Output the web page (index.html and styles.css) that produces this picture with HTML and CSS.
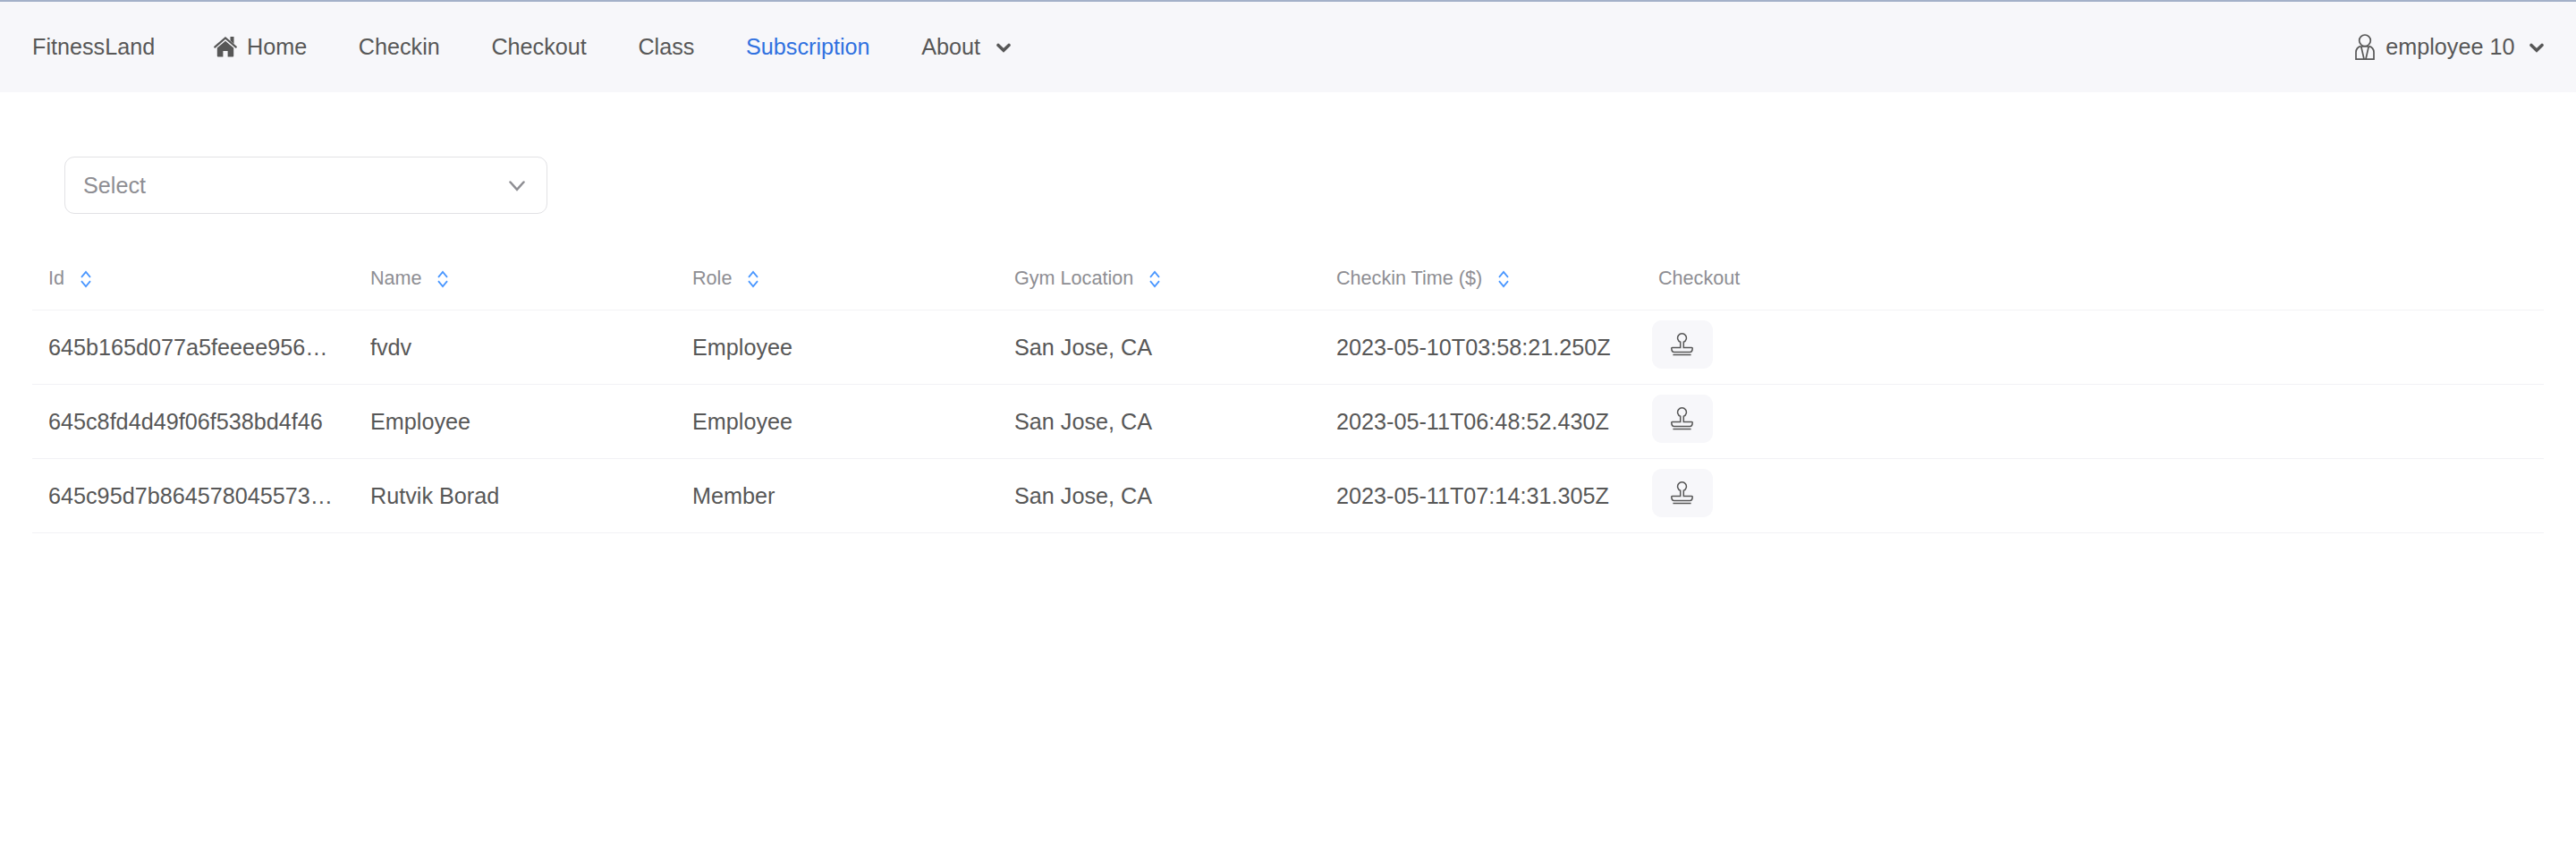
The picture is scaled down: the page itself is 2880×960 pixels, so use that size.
FILE: index.html
```html
<!DOCTYPE html>
<html lang="en">
<head>
<meta charset="utf-8">
<title>FitnessLand</title>
<link rel="stylesheet" href="styles.css">
</head>
<body>
<svg class="defs" width="0" height="0">
  <symbol id="caret" viewBox="0 0 16 11"><path d="M2 2.4 8 8.2 14 2.4" fill="none" stroke="currentColor" stroke-width="3.5" stroke-linecap="round" stroke-linejoin="miter"/></symbol>
  <symbol id="sort" viewBox="0 0 12 20"><path d="M1 7.8 6 2 11 7.8M1 12.2 6 18 11 12.2" fill="none" stroke="currentColor" stroke-width="1.8"/></symbol>
  <symbol id="stamp" viewBox="0 0 25 26"><path d="M10.7 16.4V10.3A4.9 4.9 0 1 1 14.3 10.3V16.4H23.3Q24.3 16.4 24.2 17.6Q24 21.4 21.4 21.4H3.6Q1 21.4 .8 17.6Q.7 16.4 1.7 16.4ZM2.4 24.6H22.6" fill="none" stroke="currentColor" stroke-width="1.5"/></symbol>
</svg>
<header class="navbar">
  <a class="brand">FitnessLand</a>
  <nav class="nav">
    <a class="item"><svg class="home" viewBox="0 0 26 24"><path d="M1.2 12.6 13 2.4 24.8 12.6" fill="none" stroke="currentColor" stroke-width="2.2" stroke-linecap="round"/><path d="M18.5 1H22.5V9L18.5 5.6ZM13 5.7 22.2 13.6V22.5Q22.2 23.4 21.3 23.4H15.6V17H10.4V23.4H4.7Q3.8 23.4 3.8 22.5V13.6Z" fill="currentColor"/></svg>Home</a>
    <a class="item">Checkin</a>
    <a class="item">Checkout</a>
    <a class="item">Class</a>
    <a class="item active">Subscription</a>
    <a class="item">About<svg class="caret"><use href="#caret"/></svg></a>
  </nav>
  <div class="user">
    <svg class="person" viewBox="0 0 22 30"><path d="M11 1A6.2 6.2 0 0 1 11 13.6 6.2 6.2 0 0 1 11 1ZM6.6 13.6Q1 15 1 20.5V28.2H21V20.5Q21 15 15.4 13.6M6.8 14 10 28M15.2 14 12 28M7 14H15" fill="none" stroke="currentColor" stroke-width="1.7"/></svg>employee 10<svg class="caret"><use href="#caret"/></svg>
  </div>
</header>
<main class="content">
  <div class="picker">Select<svg viewBox="0 0 18 12"><path d="M1.5 1.5 9 9.8 16.5 1.5" fill="none" stroke="currentColor" stroke-width="2.5" stroke-linecap="round"/></svg></div>
  <div class="table">
    <div class="row head">
      <div class="cell">Id<svg class="sort"><use href="#sort"/></svg></div>
      <div class="cell">Name<svg class="sort"><use href="#sort"/></svg></div>
      <div class="cell">Role<svg class="sort"><use href="#sort"/></svg></div>
      <div class="cell">Gym Location<svg class="sort"><use href="#sort"/></svg></div>
      <div class="cell">Checkin Time ($)<svg class="sort"><use href="#sort"/></svg></div>
      <div class="cell">Checkout</div>
    </div>
    <div class="row">
      <div class="cell">645b165d077a5feeee956…</div>
      <div class="cell">fvdv</div>
      <div class="cell">Employee</div>
      <div class="cell">San Jose, CA</div>
      <div class="cell">2023-05-10T03:58:21.250Z</div>
      <div class="cell action"><button class="btn"><svg class="stamp"><use href="#stamp"/></svg></button></div>
    </div>
    <div class="row">
      <div class="cell">645c8fd4d49f06f538bd4f46</div>
      <div class="cell">Employee</div>
      <div class="cell">Employee</div>
      <div class="cell">San Jose, CA</div>
      <div class="cell">2023-05-11T06:48:52.430Z</div>
      <div class="cell action"><button class="btn"><svg class="stamp"><use href="#stamp"/></svg></button></div>
    </div>
    <div class="row">
      <div class="cell">645c95d7b864578045573…</div>
      <div class="cell">Rutvik Borad</div>
      <div class="cell">Member</div>
      <div class="cell">San Jose, CA</div>
      <div class="cell">2023-05-11T07:14:31.305Z</div>
      <div class="cell action"><button class="btn"><svg class="stamp"><use href="#stamp"/></svg></button></div>
    </div>
  </div>
</main>
</body>
</html>
```
FILE: styles.css
```css
* { box-sizing: border-box; }
body {
  margin: 0;
  background: #fff;
  color: #575757;
  font: 25.2px/36px "Liberation Sans", Arial, sans-serif;
}
svg { display: block; flex: none; }
.defs { position: absolute; }
.navbar {
  display: flex;
  align-items: center;
  height: 103px;
  padding: 0 36px 1px;
  border-top: 2px solid #a4b1c9;
  background: #f7f7fa;
}
.brand { margin-right: 37px; }
.nav { display: flex; }
.item { display: flex; align-items: center; padding: 0 28.8px; }
.active { color: #3071e0; }
.home { width: 26px; height: 24px; margin-right: 11px; }
.caret { width: 16px; height: 11px; margin: 2px 0 0 17.5px; }
.user { display: flex; align-items: center; margin-left: auto; }
.user .caret { margin-left: 16.5px; }
.person { width: 22px; height: 30px; margin: 1px 12px 0 0; }
.content { padding: 72px 36px; }
.picker {
  display: flex;
  align-items: center;
  justify-content: space-between;
  width: 540px;
  height: 64px;
  margin-left: 36px;
  padding: 0 24px 0 20px;
  border: 1px solid #e2e2e5;
  border-radius: 11px;
  color: #8e8e93;
}
.picker svg { width: 18px; height: 12px; margin-top: 1px; }
.table { margin-top: 36px; }
.row {
  display: flex;
  height: 83px;
  border-bottom: 1px solid #f2f2f5;
}
.cell {
  display: flex;
  align-items: center;
  width: 360px;
  padding: 0 18px;
  white-space: nowrap;
}
.head { height: 72px; color: #8e8e93; font-size: 21.6px; }
.sort { width: 12px; height: 20px; margin: 3px 0 0 17.5px; color: #4896ff; }
.action { align-items: flex-start; padding: 11px; }
.btn {
  display: flex;
  align-items: center;
  justify-content: center;
  width: 68px;
  height: 54px;
  padding: 0 2px 1px 0;
  border: 0;
  border-radius: 11px;
  background: #f7f7fa;
  color: #575757;
}
.stamp { width: 25px; height: 26px; }
```
